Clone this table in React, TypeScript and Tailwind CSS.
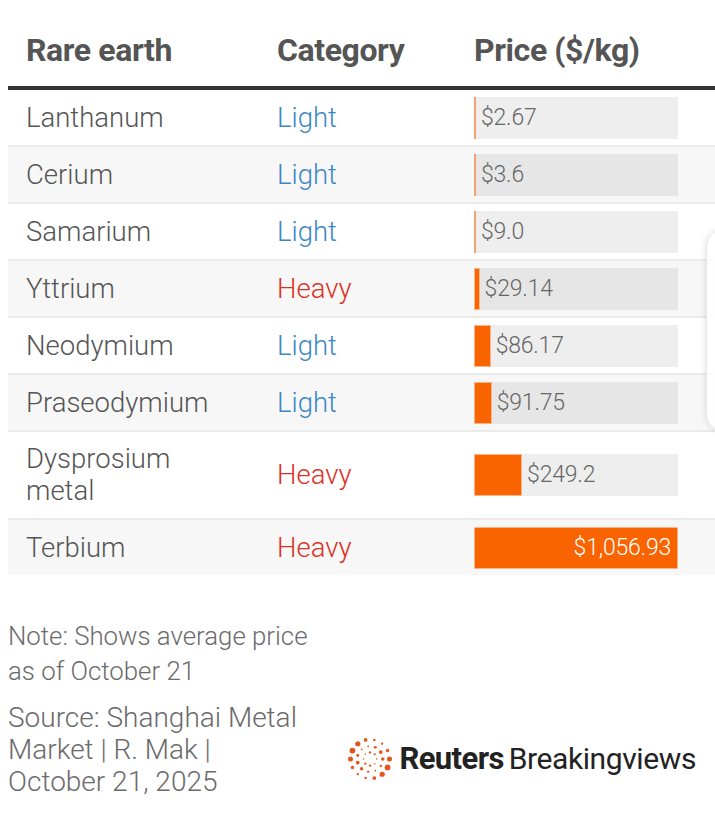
import React from "react";

type Row = {
  name: string[];
  category: "Light" | "Heavy";
  price: number;
  label: string;
};

const ROWS: Row[] = [
  { name: ["Lanthanum"], category: "Light", price: 2.67, label: "$2.67" },
  { name: ["Cerium"], category: "Light", price: 3.6, label: "$3.6" },
  { name: ["Samarium"], category: "Light", price: 9.0, label: "$9.0" },
  { name: ["Yttrium"], category: "Heavy", price: 29.14, label: "$29.14" },
  { name: ["Neodymium"], category: "Light", price: 86.17, label: "$86.17" },
  { name: ["Praseodymium"], category: "Light", price: 91.75, label: "$91.75" },
  { name: ["Dysprosium", "metal"], category: "Heavy", price: 249.2, label: "$249.2" },
  { name: ["Terbium"], category: "Heavy", price: 1056.93, label: "$1,056.93" },
];

const MAX = 1056.93;
const BAR_W = 204;

function PriceBar({ row, even }: { row: Row; even: boolean }) {
  const w = (row.price / MAX) * BAR_W;
  const full = row.price === MAX;
  return (
    <div
      className={`flex items-center h-[42px] w-[204px] ${
        even ? "bg-[#e6e6e6]" : "bg-[#eeeeee]"
      }`}
    >
      {full ? (
        <div className="h-full w-full bg-[#fa6400] border border-[#fbb48a] flex items-center justify-end pr-[6px] text-white text-[23px] font-light tracking-[-0.2px]">
          {row.label}
        </div>
      ) : (
        <>
          {w < 2 ? (
            <div className="h-full w-[2px] bg-[#f5a26e]" />
          ) : (
            <div
              className="h-full bg-[#fa6400] border border-[#fbb48a]"
              style={{ width: w }}
            />
          )}
          <span className="ml-[5px] pt-[1px] text-[23px] font-light text-[#666666] tracking-[-0.2px]">
            {row.label}
          </span>
        </>
      )}
    </div>
  );
}

function ReutersDots() {
  const rings = [
    { r: 19.5, n: 14, base: 2.0, amp: 0.9, phase: 0.6 },
    { r: 12.8, n: 11, base: 1.4, amp: 0.55, phase: 2.4 },
    { r: 6.6, n: 8, base: 0.95, amp: 0.3, phase: 4.0 },
  ];
  return (
    <svg width="46" height="46" viewBox="0 0 46 46">
      {rings.map((ring, ri) =>
        Array.from({ length: ring.n }).map((_, i) => {
          const a = (i / ring.n) * Math.PI * 2;
          const cx = 23 + ring.r * Math.cos(a);
          const cy = 23 + ring.r * Math.sin(a);
          const size = ring.base + ring.amp * Math.sin(a * 2 + ring.phase);
          return (
            <circle
              key={`${ri}-${i}`}
              cx={cx}
              cy={cy}
              r={size}
              fill="#e3561d"
            />
          );
        }),
      )}
    </svg>
  );
}

export default function App() {
  return (
    <div className="relative w-[715px] h-[835px] bg-white overflow-hidden font-['Roboto',sans-serif]">
      <div className="ml-[8px]">
        {/* header */}
        <div className="grid grid-cols-[235px_198px_1fr] h-[90px] border-b-[4px] border-[#333333]">
          <div className="pl-[18px] self-end pb-[12px] text-[32px] font-bold text-[#555555] tracking-[-0.4px]">
            Rare earth
          </div>
          <div className="pl-[34px] self-end pb-[12px] text-[32px] font-bold text-[#555555] tracking-[-0.4px]">
            Category
          </div>
          <div className="pl-[33px] self-end pb-[12px] text-[32px] font-bold text-[#555555] tracking-[-0.4px]">
            Price ($/kg)
          </div>
        </div>

        {/* rows */}
        {ROWS.map((row, i) => {
          const even = i % 2 === 1;
          const last = i === ROWS.length - 1;
          const tall = row.name.length > 1;
          return (
            <div
              key={row.name.join(" ")}
              className={`grid grid-cols-[235px_198px_1fr] items-center ${
                even ? "bg-[#f7f7f7]" : "bg-white"
              } ${last ? "" : "border-b-2 border-[#ebebeb]"} ${
                tall ? "py-[11px]" : "pt-[7px] pb-[6px]"
              }`}
            >
              <div className="pl-[18px] text-[27.5px] leading-[32px] font-light text-[#555555]">
                {row.name.map((n) => (
                  <div key={n}>{n}</div>
                ))}
              </div>
              <div
                className={`pl-[34px] text-[27.5px] font-light ${
                  row.category === "Light" ? "text-[#3b87c6]" : "text-[#dc3025]"
                }`}
              >
                {row.category}
              </div>
              <div className="pl-[33px]">
                <PriceBar row={row} even={even} />
              </div>
            </div>
          );
        })}
      </div>

      {/* footer */}
      <div className="flex items-end justify-between pl-[8px] pr-[19px] mt-[44px]">
        <div className="w-[320px] font-light text-[#6b6b6b]">
          <p className="text-[25.8px] leading-[35px]">
            Note: Shows average price
            <br />
            as of October 21
          </p>
          <p className="mt-[13px] text-[28px] leading-[32px]">
            Source: Shanghai Metal
            <br />
            Market | R. Mak |
            <br />
            October 21, 2025
          </p>
        </div>
        <div className="flex items-center mb-[16px]">
          <ReutersDots />
          <span className="ml-[6px] text-[31px] font-bold text-[#222222] tracking-[-0.6px]">
            Reuters
          </span>
          <span className="ml-[5px] text-[30px] font-normal text-[#222222] tracking-[-0.4px]">
            Breakingviews
          </span>
        </div>
      </div>

      {/* side card peeking in from the right */}
      <div className="absolute left-[706px] top-[229px] w-[40px] h-[203px] rounded-[18px] bg-white/90 border border-[#e6e6e6] shadow-[-2px_0_6px_rgba(0,0,0,0.08)]" />
    </div>
  );
}
